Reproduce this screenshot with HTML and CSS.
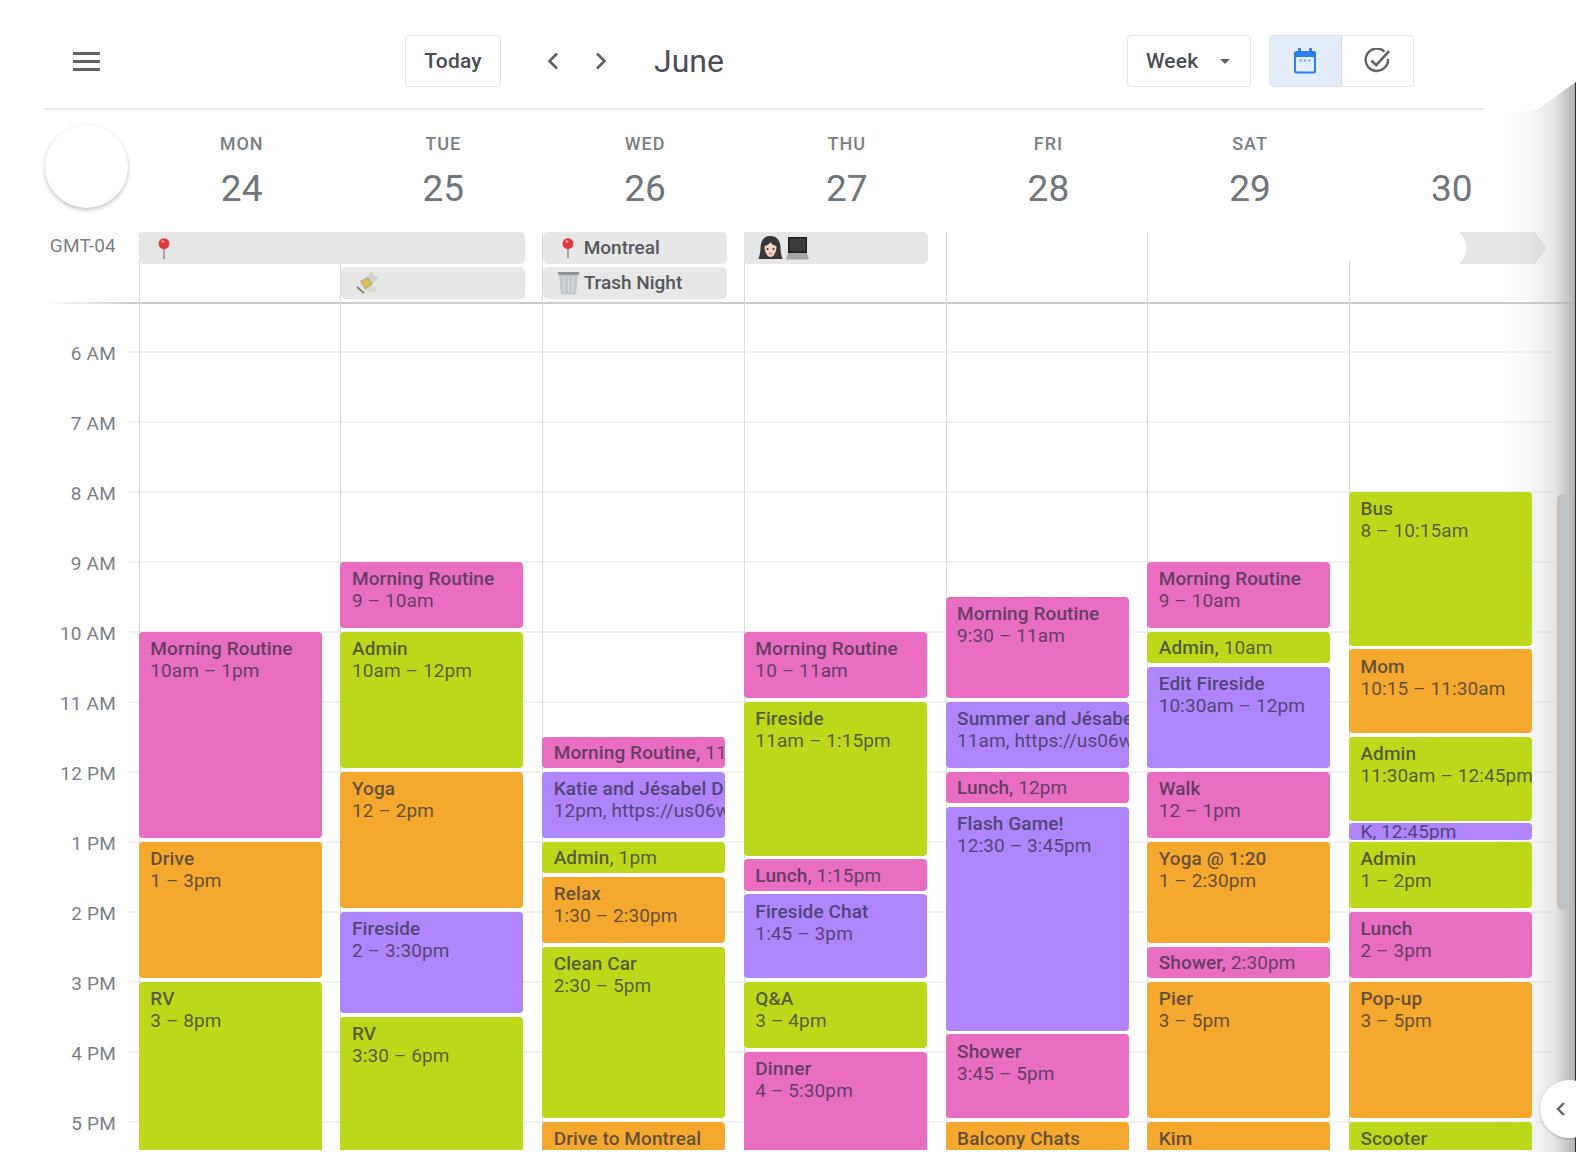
FILE: index.html
```html
<!DOCTYPE html>
<html lang="en">
<head>
  <meta charset="UTF-8">
  <title>Calendar - June</title>
  <link rel="stylesheet" href="styles.css">
</head>
<body>

  <header class="toolbar">
    <svg class="menu-icon" width="27" height="19" viewBox="0 0 27 19"><path d="M0 1.5h27M0 9.500h27M0 17.500h27" stroke="#5f6368" stroke-width="3"/></svg>
    <button class="tool-btn today">Today</button>
    <svg class="chevron prev" width="14" height="18" viewBox="0 0 14 18"><path d="M11 1.500 3.500 9l7.500 7.500" fill="none" stroke="#5f6368" stroke-width="2.700"/></svg>
    <svg class="chevron next" width="14" height="18" viewBox="0 0 14 18"><path d="M3 1.500 10.500 9 3 16.500" fill="none" stroke="#5f6368" stroke-width="2.700"/></svg>
    <div class="month">June</div>
    <button class="tool-btn week-btn">Week <span class="caret"></span></button>
    <div class="toggle">
      <div class="toggle-cell active">
        <svg width="24" height="26" viewBox="0 0 24 26">
          <rect x="1" y="3" width="22" height="22.500" rx="2.500" fill="#2f7de8"/>
          <rect x="5" y="0" width="3" height="5" rx="1" fill="#2f7de8"/>
          <rect x="16" y="0" width="3" height="5" rx="1" fill="#2f7de8"/>
          <rect x="3" y="9" width="18" height="14.500" rx="1" fill="#e3edfb"/>
          <path d="M6.500 12.500h2.200M10.900 12.500h2.200M15.300 12.500h2.200" stroke="#6a9fee" stroke-width="2"/>
        </svg>
      </div>
      <div class="toggle-cell">
        <svg width="27" height="26" viewBox="0 0 27 26">
          <path d="M20.500 3.600A11.200 11.200 0 1 0 24 11" fill="none" stroke="#5f6368" stroke-width="2.400"/>
          <path d="M7.500 12.500l4.700 4.700L25 3.200" fill="none" stroke="#5f6368" stroke-width="2.600"/>
        </svg>
      </div>
    </div>
  </header>

  <div class="day-head">
    <div class="corner"><div class="corner-circle"></div></div>
    <div class="day"><span class="day-name">MON</span><span class="day-num">24</span></div>
    <div class="day"><span class="day-name">TUE</span><span class="day-num">25</span></div>
    <div class="day"><span class="day-name">WED</span><span class="day-num">26</span></div>
    <div class="day"><span class="day-name">THU</span><span class="day-num">27</span></div>
    <div class="day"><span class="day-name">FRI</span><span class="day-num">28</span></div>
    <div class="day"><span class="day-name">SAT</span><span class="day-num">29</span></div>
    <div class="day"><span class="day-name">&nbsp;</span><span class="day-num">30</span></div>
  </div>

  <div class="allday">
    <div class="tz">GMT-04</div>
    <div class="allday-line c1"></div>
    <div class="allday-line c2"></div>
    <div class="allday-line c3"></div>
    <div class="allday-line c4"></div>
    <div class="allday-line c5"></div>
    <div class="allday-line c6"></div>
    <div class="allday-line c7 late"></div>

    <div class="chip c1 r1 span2">
      <svg class="pin" width="12" height="21" viewBox="0 0 12 21"><path d="M6 8v13" stroke="#9a9a9a" stroke-width="1.800"/><circle cx="6" cy="5.600" r="5.400" fill="#e8343f"/><circle cx="5" cy="3.600" r="1.400" fill="#f7a5a5"/></svg>
    </div>
    <div class="chip c2 r2">
      <svg class="money" width="24" height="22" viewBox="0 0 24 22">
        <path d="M9 6 16 0l3 4 4 1-7 7z" fill="#d3d5c8"/>
        <path d="M12 14l8 1 1 4-9 1-3-3z" fill="#d8dacf"/>
        <path d="M4 9l8-4 5 7-8 6z" fill="#b3b48a"/>
        <circle cx="10.500" cy="11" r="3.600" fill="#e2bd45"/>
        <path d="M1 15l7 6" stroke="#85876f" stroke-width="2"/>
      </svg>
    </div>
    <div class="chip c3 r1 place-chip">
      <svg class="pin" width="12" height="20" viewBox="0 0 12 20"><path d="M6 8v12" stroke="#9a9a9a" stroke-width="1.800"/><circle cx="6" cy="5.600" r="5.400" fill="#e8343f"/><circle cx="5" cy="3.600" r="1.400" fill="#f7a5a5"/></svg>
      <span class="chip-text">Montreal</span>
    </div>
    <div class="chip c3 r2 trash-chip">
      <svg class="trash" width="23" height="24" viewBox="0 0 23 24">
        <path d="M0.500 1h22l-1 3h-20z" fill="#8f9498"/>
        <path d="M2 4h19l-2 19.500H4z" fill="#c3c8cc"/>
        <path d="M6.500 6l1 15M11.500 6v15M16.500 6l-1 15" stroke="#dde0e2" stroke-width="1.200"/>
      </svg>
      <span class="chip-text">Trash Night</span>
    </div>
    <div class="chip c4 r1 person-chip">
      <svg width="25" height="24" viewBox="0 0 25 24">
        <path d="M12.500 0C5 0 2.500 6 2.500 12c0 5-1.500 9-2 11h24c-.5-2-2-6-2-11 0-6-2.500-12-10-12z" fill="#3a3536"/>
        <path d="M12.500 6c-1 2.500-4 3.500-6 4 0 6 2.500 11 6 11s6-5 6-11c-2.500-.5-5-1.500-6-4z" fill="#f3d3c2"/>
        <circle cx="9.500" cy="13" r="1" fill="#3a3536"/><circle cx="15.500" cy="13" r="1" fill="#3a3536"/>
        <path d="M11 17.500h3" stroke="#d4736f" stroke-width="1.400"/>
      </svg>
      <svg width="23" height="23" viewBox="0 0 23 23">
        <rect x="2" y="0" width="19" height="16" fill="#1d1d1f"/>
        <rect x="3.500" y="1.500" width="16" height="13" fill="#3a3b3e"/>
        <path d="M2 16h19l2 6.500H0z" fill="#a5a7a9"/>
      </svg>
    </div>
    <div class="chip c7 r1 cont-chip"></div>
  </div>
  <div class="allday-rule"></div>

  <div class="timed">
    <div class="hours">
      <div class="hour">6 AM</div>
      <div class="hour">7 AM</div>
      <div class="hour">8 AM</div>
      <div class="hour">9 AM</div>
      <div class="hour">10 AM</div>
      <div class="hour">11 AM</div>
      <div class="hour">12 PM</div>
      <div class="hour">1 PM</div>
      <div class="hour">2 PM</div>
      <div class="hour">3 PM</div>
      <div class="hour">4 PM</div>
      <div class="hour">5 PM</div>
    </div>

    <div class="col">
      <div class="ev pink" style="grid-row: 17 / 29"><b>Morning Routine</b><span>10am – 1pm</span></div>
      <div class="ev orange" style="grid-row: 29 / 37"><b>Drive</b><span>1 – 3pm</span></div>
      <div class="ev green" style="grid-row: 37 / 57"><b>RV</b><span>3 – 8pm</span></div>
    </div>

    <div class="col">
      <div class="ev pink" style="grid-row: 13 / 17"><b>Morning Routine</b><span>9 – 10am</span></div>
      <div class="ev green" style="grid-row: 17 / 25"><b>Admin</b><span>10am – 12pm</span></div>
      <div class="ev orange" style="grid-row: 25 / 33"><b>Yoga</b><span>12 – 2pm</span></div>
      <div class="ev purple" style="grid-row: 33 / 39"><b>Fireside</b><span>2 – 3:30pm</span></div>
      <div class="ev green" style="grid-row: 39 / 49"><b>RV</b><span>3:30 – 6pm</span></div>
    </div>

    <div class="col">
      <div class="ev pink short" style="grid-row: 23 / 25"><b>Morning Routine,</b> 11:30am</div>
      <div class="ev purple" style="grid-row: 25 / 29"><b>Katie and Jésabel Dinner</b><span>12pm, https://us06web.zoom.us</span></div>
      <div class="ev green short" style="grid-row: 29 / 31"><b>Admin,</b> 1pm</div>
      <div class="ev orange" style="grid-row: 31 / 35"><b>Relax</b><span>1:30 – 2:30pm</span></div>
      <div class="ev green" style="grid-row: 35 / 45"><b>Clean Car</b><span>2:30 – 5pm</span></div>
      <div class="ev orange" style="grid-row: 45 / 55"><b>Drive to Montreal</b><span>5 – 7:30pm</span></div>
    </div>

    <div class="col">
      <div class="ev pink" style="grid-row: 17 / 21"><b>Morning Routine</b><span>10 – 11am</span></div>
      <div class="ev green" style="grid-row: 21 / 30"><b>Fireside</b><span>11am – 1:15pm</span></div>
      <div class="ev pink short" style="grid-row: 30 / 32"><b>Lunch,</b> 1:15pm</div>
      <div class="ev purple" style="grid-row: 32 / 37"><b>Fireside Chat</b><span>1:45 – 3pm</span></div>
      <div class="ev green" style="grid-row: 37 / 41"><b>Q&amp;A</b><span>3 – 4pm</span></div>
      <div class="ev pink" style="grid-row: 41 / 47"><b>Dinner</b><span>4 – 5:30pm</span></div>
    </div>

    <div class="col">
      <div class="ev pink" style="grid-row: 15 / 21"><b>Morning Routine</b><span>9:30 – 11am</span></div>
      <div class="ev purple" style="grid-row: 21 / 25"><b>Summer and Jésabel Chat</b><span>11am, https://us06web.zoom.us</span></div>
      <div class="ev pink short" style="grid-row: 25 / 27"><b>Lunch,</b> 12pm</div>
      <div class="ev purple" style="grid-row: 27 / 40"><b>Flash Game!</b><span>12:30 – 3:45pm</span></div>
      <div class="ev pink" style="grid-row: 40 / 45"><b>Shower</b><span>3:45 – 5pm</span></div>
      <div class="ev orange" style="grid-row: 45 / 53"><b>Balcony Chats</b><span>5 – 7pm</span></div>
    </div>

    <div class="col">
      <div class="ev pink" style="grid-row: 13 / 17"><b>Morning Routine</b><span>9 – 10am</span></div>
      <div class="ev green short" style="grid-row: 17 / 19"><b>Admin,</b> 10am</div>
      <div class="ev purple" style="grid-row: 19 / 25"><b>Edit Fireside</b><span>10:30am – 12pm</span></div>
      <div class="ev pink" style="grid-row: 25 / 29"><b>Walk</b><span>12 – 1pm</span></div>
      <div class="ev orange" style="grid-row: 29 / 35"><b>Yoga @ 1:20</b><span>1 – 2:30pm</span></div>
      <div class="ev pink short" style="grid-row: 35 / 37"><b>Shower,</b> 2:30pm</div>
      <div class="ev orange" style="grid-row: 37 / 45"><b>Pier</b><span>3 – 5pm</span></div>
      <div class="ev orange" style="grid-row: 45 / 53"><b>Kim</b><span>5 – 7pm</span></div>
    </div>

    <div class="col">
      <div class="ev green" style="grid-row: 9 / 18"><b>Bus</b><span>8 – 10:15am</span></div>
      <div class="ev orange" style="grid-row: 18 / 23"><b>Mom</b><span>10:15 – 11:30am</span></div>
      <div class="ev green" style="grid-row: 23 / 28"><b>Admin</b><span>11:30am – 12:45pm</span></div>
      <div class="ev purple tiny" style="grid-row: 28 / 29">K, 12:45pm</div>
      <div class="ev green" style="grid-row: 29 / 33"><b>Admin</b><span>1 – 2pm</span></div>
      <div class="ev pink" style="grid-row: 33 / 37"><b>Lunch</b><span>2 – 3pm</span></div>
      <div class="ev orange" style="grid-row: 37 / 45"><b>Pop-up</b><span>3 – 5pm</span></div>
      <div class="ev green" style="grid-row: 45 / 53"><b>Scooter</b><span>5 – 7pm</span></div>
    </div>
  </div>

  <!-- page curl / side panel edge -->
  <div class="edge-shade"></div>
  <div class="scroll-thumb"></div>
  <div class="panel-tab">
    <svg width="10" height="16" viewBox="0 0 10 16"><path d="M8 2 2 8l6 6" fill="none" stroke="#5f6368" stroke-width="2.400"/></svg>
  </div>

</body>
</html>
```

FILE: styles.css
```css
* {
  box-sizing: border-box;
}

body {
  margin: 0;
  width: 1576px;
  height: 1152px;
  overflow: hidden;
  position: relative;
  background: #fff;
  font-family: 'Roboto', 'Liberation Sans', sans-serif;
  color: #3c4043;
}

/* toolbar */
.toolbar {
  display: flex;
  align-items: center;
  height: 110px;
  width: 1440px;
  margin-left: 44px;
  padding-top: 14px;
  border-bottom: 2px solid #e8e9ea;
}

.menu-icon {
  margin-left: 29px;
}

.tool-btn {
  height: 52px;
  background: #fff;
  border: 1.5px solid #e3e4e6;
  border-radius: 4px;
  font-family: inherit;
  font-size: 21px;
  font-weight: 500;
  letter-spacing: 0.2px;
  color: #4a4d51;
}

.today {
  width: 96px;
  margin-left: 305px;
  padding: 0;
}

.chevron.prev {
  margin-left: 45px;
}

.chevron.next {
  margin-left: 34px;
}

.month {
  margin-left: 46px;
  font-size: 32px;
  color: #4a4d51;
}

.week-btn {
  width: 124px;
  margin-left: 403px;
  display: flex;
  align-items: center;
  padding-left: 18px;
}

.caret {
  width: 0;
  height: 0;
  margin-left: 22px;
  border-left: 5px solid transparent;
  border-right: 5px solid transparent;
  border-top: 5px solid #5f6368;
}

.toggle {
  display: flex;
  width: 145px;
  height: 52px;
  margin-left: 18px;
  border: 1.5px solid #e3e4e6;
  border-radius: 4px;
  overflow: hidden;
}

.toggle-cell {
  flex: 1;
  display: flex;
  align-items: center;
  justify-content: center;
}

.toggle-cell.active {
  flex: none;
  width: 72px;
  background: #e4edfb;
  border-right: 1px solid #d5dbe4;
}

/* day header */
.day-head {
  display: grid;
  grid-template-columns: 138.8px repeat(7, 201.7px);
  height: 122px;
}

.corner {
  padding: 15px 0 0 45px;
}

.corner-circle {
  width: 83px;
  height: 83px;
  border-radius: 50%;
  background: #fff;
  box-shadow: 0 2px 4px rgba(0, 0, 0, 0.25);
}

.day {
  display: flex;
  flex-direction: column;
  align-items: center;
  padding: 22px 0 0 4px;
}

.day-name {
  font-size: 18px;
  font-weight: 500;
  line-height: 24px;
  letter-spacing: 1px;
  color: #7b7f84;
}

.day-num {
  margin-top: 11px;
  font-size: 37px;
  line-height: 44px;
  color: #70757a;
}

/* all-day strip */
.allday {
  display: grid;
  grid-template-columns: 138.8px repeat(7, 201.7px);
  grid-template-rows: 32px 32px;
  row-gap: 2.5px;
  height: 70px;
}

.tz {
  grid-column: 1;
  grid-row: 1;
  padding: 3px 22.8px 0 0;
  text-align: right;
  font-size: 19px;
  letter-spacing: 0.2px;
  line-height: 22px;
  color: #7b7f84;
}

.allday-line {
  grid-row: 1 / 3;
  margin-bottom: -7px;
  border-left: 1px solid #d7d9dc;
}

.allday-line.late {
  margin-top: 28px;
}

.c1 { grid-column: 2; }
.c2 { grid-column: 3; }
.c3 { grid-column: 4; }
.c4 { grid-column: 5; }
.c5 { grid-column: 6; }
.c6 { grid-column: 7; }
.c7 { grid-column: 8; }

.r1 { grid-row: 1; }
.r2 { grid-row: 2; }

.chip {
  display: flex;
  align-items: center;
  width: 184px;
  margin-left: 0.5px;
  padding-left: 19px;
  background: #e7e7e7;
  border-radius: 5px;
}

.chip.span2 {
  grid-column: 2 / span 2;
  width: 386px;
  padding-left: 19px;
}

.chip.c2 {
  padding-left: 15px;
}

.trash-chip {
  padding-left: 14px;
}

.person-chip {
  padding-left: 14px;
  gap: 3px;
}

.place-chip .chip-text {
  margin: 0 0 2px 10px;
}

.chip-text {
  margin-left: 11px;
  font-size: 19px;
  font-weight: 500;
  color: #54575b;
}

.trash-chip .chip-text {
  margin-left: 4px;
}

.cont-chip {
  width: 88px;
  margin-left: 109.5px;
  padding: 0;
  border-radius: 0;
  clip-path: polygon(0 0, 77px 0, 88px 16px, 77px 32px, 0 32px, 5px 27px, 7.5px 20px, 7.5px 12px, 5px 5px);
}

.allday-rule {
  height: 1.5px;
  margin-left: 44px;
  background: linear-gradient(to right, #fff, #c9cacc 90px);
}

/* timed grid */
.timed {
  display: grid;
  grid-template-columns: 138.8px repeat(7, 201.7px);
  height: 846.5px;
  overflow: hidden;
  background-image: linear-gradient(#e1e2e4 1.5px, transparent 1.5px);
  background-size: 1424px 70px;
  background-position: 129px 47.5px;
  background-repeat: repeat-y;
}

.hours {
  padding: 15.5px 22.8px 0 0;
  text-align: right;
}

.hour {
  height: 70px;
  font-size: 19px;
  letter-spacing: 0.2px;
  line-height: 70px;
  color: #7b7f84;
}

.col {
  display: grid;
  grid-template-rows: repeat(60, 17.5px);
  grid-template-columns: 182px;
  align-content: start;
  margin-top: -1.3px;
  padding-top: 49.3px;
  border-left: 1px solid #d7d9dc;
}

.ev {
  position: relative;
  z-index: 1;
  margin: 0 0 3.5px -1px;
  padding: 6.5px 11.5px 0;
  border-radius: 4px;
  overflow: hidden;
  white-space: nowrap;
  font-size: 19px;
  letter-spacing: 0.1px;
  line-height: 22px;
  color: rgba(44, 44, 64, 0.72);
}

.ev b {
  display: block;
  font-weight: 500;
}

.ev span {
  display: block;
}

.ev.short {
  padding-top: 5.5px;
}

.ev.short b {
  display: inline;
}

.ev.tiny {
  margin-bottom: 2px;
  margin-top: -1px;
  padding-top: 0;
  line-height: 18px;
}

.pink { background: #e96dc1; }
.green { background: #bdd81b; }
.orange { background: #f4a82e; }
.purple { background: #ae85fb; }

/* right edge */
.edge-shade {
  position: absolute;
  top: 82px;
  right: 0;
  bottom: 0;
  width: 76px;
  border-right: 1px solid #2a2a2a;
  background: linear-gradient(to right, rgba(190, 190, 190, 0), rgba(190, 190, 190, 0.08) 35%, rgba(185, 185, 185, 0.35) 72%, rgba(175, 175, 175, 0.95));
  clip-path: polygon(100% 0, 100% 100%, 0 100%, 0 30px, 36px 28px);
}

.scroll-thumb {
  position: absolute;
  left: 1557px;
  top: 494px;
  width: 12px;
  height: 416px;
  border-radius: 6px;
  background: #bfc2c5;
}

.panel-tab {
  position: absolute;
  left: 1540px;
  top: 1080px;
  width: 58px;
  height: 58px;
  padding: 21px 0 0 16px;
  border-radius: 50%;
  background: #fff;
  box-shadow: 0 1px 3px rgba(0, 0, 0, 0.22);
}
```
